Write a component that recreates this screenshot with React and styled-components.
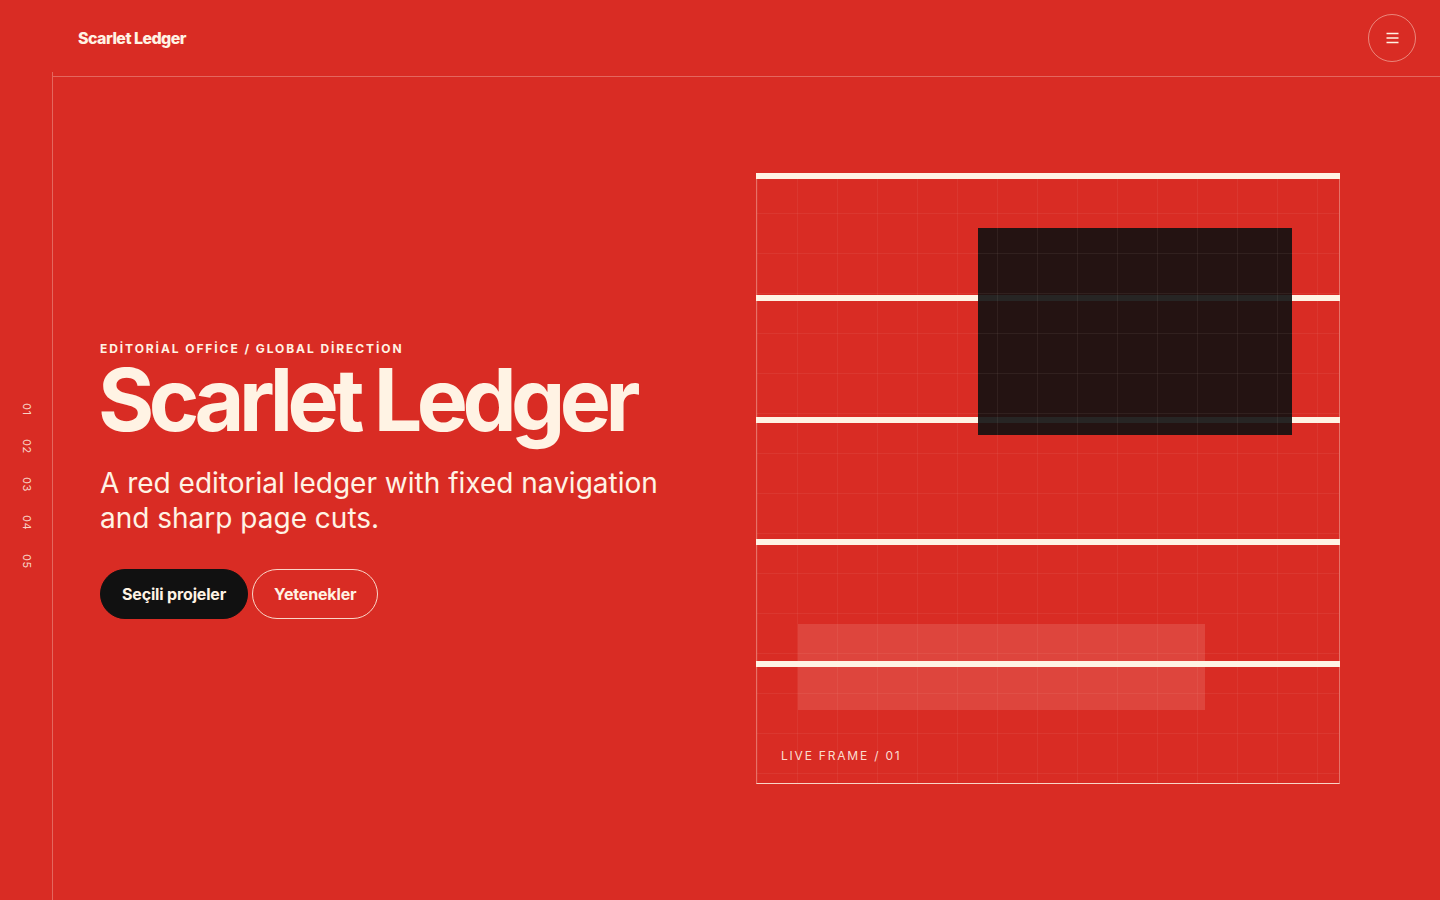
import React from 'react';
import styled, { createGlobalStyle } from 'styled-components';

const RED = '#d92c24';
const CREAM = '#fff3e4';

const GlobalStyle = createGlobalStyle`
  * { box-sizing: border-box; }
  html, body { margin: 0; padding: 0; }
  body {
    background: ${RED};
    color: ${CREAM};
    font-family: Inter, 'Noto Sans', 'Liberation Sans', sans-serif;
    -webkit-font-smoothing: antialiased;
  }
`;

const Page = styled.div`
  display: grid;
  grid-template-columns: 53px 1fr;
  grid-template-rows: 76px 1fr;
  height: 900px;
  overflow: hidden;
`;

const Header = styled.header`
  grid-column: 1 / -1;
  display: flex;
  align-items: center;
  justify-content: space-between;
  padding: 0 24px 0 78px;
`;

const Logo = styled.a`
  font-size: 16px;
  font-weight: 800;
  letter-spacing: -0.035em;
  color: ${CREAM};
  text-decoration: none;
`;

const MenuButton = styled.button`
  width: 48px;
  height: 48px;
  border-radius: 50%;
  border: 1px solid rgba(255, 243, 228, 0.45);
  background: transparent;
  color: ${CREAM};
  display: grid;
  place-items: center;
  padding: 0;
  cursor: pointer;
`;

const Rail = styled.nav`
  margin-top: -4px;
  border-right: 1px solid rgba(255, 243, 228, 0.3);
  display: flex;
  flex-direction: column;
  align-items: center;
  justify-content: center;
  gap: 23px;
`;

const RailItem = styled.span`
  writing-mode: vertical-rl;
  font-size: 11px;
  letter-spacing: 0.06em;
  color: rgba(255, 243, 228, 0.85);
  margin-left: 1px;
`;

const Main = styled.main`
  border-top: 1px solid rgba(255, 243, 228, 0.3);
  display: grid;
  grid-template-columns: 1fr 584px;
  column-gap: 72px;
  align-items: center;
  padding: 96px 100px 116px 47px;
`;

const Intro = styled.div`
  display: flex;
  flex-direction: column;
  padding-top: 4px;
`;

const Eyebrow = styled.p`
  margin: 0 0 5px;
  font-size: 12px;
  line-height: 14px;
  font-weight: 700;
  letter-spacing: 0.16em;
`;

const Title = styled.h1`
  margin: 0 0 0 -2px;
  font-size: 86px;
  line-height: 0.92;
  font-weight: 700;
  letter-spacing: -0.065em;
`;

const Lead = styled.p`
  margin: 26px 0 33px;
  font-size: 28px;
  line-height: 35px;
  font-weight: 400;
  letter-spacing: 0;
  max-width: 580px;
`;

const Actions = styled.div`
  display: flex;
  gap: 4px;
`;

const Button = styled.a`
  height: 50px;
  padding: 0 21px;
  border-radius: 25px;
  display: inline-flex;
  align-items: center;
  font-size: 16px;
  font-weight: 700;
  letter-spacing: -0.01em;
  text-decoration: none;
  color: ${CREAM};
  background: ${(p) => (p.$solid ? '#111' : 'transparent')};
  border: 1px solid ${(p) => (p.$solid ? '#111' : 'rgba(255, 243, 228, 0.85)')};
`;

const Frame = styled.div`
  position: relative;
  height: 611px;
  border-left: 1px solid rgba(255, 243, 228, 0.35);
  border-right: 1px solid rgba(255, 243, 228, 0.35);
  border-bottom: 1px solid rgba(255, 243, 228, 0.85);

  &::before {
    content: '';
    position: absolute;
    inset: 0 -1px;
    z-index: 1;
    background: repeating-linear-gradient(
      to bottom,
      ${CREAM} 0 6px,
      transparent 6px 122px
    );
  }

  &::after {
    content: '';
    position: absolute;
    inset: 0;
    z-index: 3;
    pointer-events: none;
    background-image:
      linear-gradient(to right, rgba(255, 240, 228, 0.06) 1px, transparent 1px),
      linear-gradient(to bottom, rgba(255, 240, 228, 0.06) 1px, transparent 1px);
    background-size: 40px 40px;
  }
`;

const Block = styled.div`
  position: absolute;
  left: ${(p) => p.$x}%;
  top: ${(p) => p.$y}%;
  width: ${(p) => p.$w}%;
  height: ${(p) => p.$h}%;
  z-index: ${(p) => (p.$dark ? 2 : 0)};
  background: ${(p) => (p.$dark ? 'rgba(18, 17, 17, 0.91)' : 'rgba(255, 240, 228, 0.13)')};
`;

const Caption = styled.span`
  position: absolute;
  left: 24px;
  bottom: 20px;
  z-index: 4;
  font-size: 12px;
  font-weight: 400;
  letter-spacing: 0.15em;
  color: rgba(255, 243, 228, 0.9);
`;

const MenuIcon = () => (
  <svg width="13" height="12" viewBox="0 0 13 12" fill="none" stroke={CREAM} strokeWidth="1.3">
    <path d="M0.5 1.5h12M0.5 6h12M0.5 10.5h12" />
  </svg>
);

const App = () => {
  const sections = ['01', '02', '03', '04', '05'];

  return (
    <>
      <GlobalStyle />
      <Page>
        <Header>
          <Logo href='#'>Scarlet Ledger</Logo>
          <MenuButton aria-label='Menu'>
            <MenuIcon />
          </MenuButton>
        </Header>
        <Rail>
          {sections.map((s) => (
            <RailItem key={s}>{s}</RailItem>
          ))}
        </Rail>
        <Main>
          <Intro>
            <Eyebrow>EDİTORİAL OFFİCE / GLOBAL DİRECTİON</Eyebrow>
            <Title>Scarlet Ledger</Title>
            <Lead>A red editorial ledger with fixed navigation and sharp page cuts.</Lead>
            <Actions>
              <Button $solid href='#'>Seçili projeler</Button>
              <Button href='#'>Yetenekler</Button>
            </Actions>
          </Intro>
          <Frame>
            <Block $x={7} $y={74} $w={70} $h={14} />
            <Block $dark $x={38} $y={9} $w={54} $h={34} />
            <Caption>LIVE FRAME / 01</Caption>
          </Frame>
        </Main>
      </Page>
    </>
  );
};

export default App;
